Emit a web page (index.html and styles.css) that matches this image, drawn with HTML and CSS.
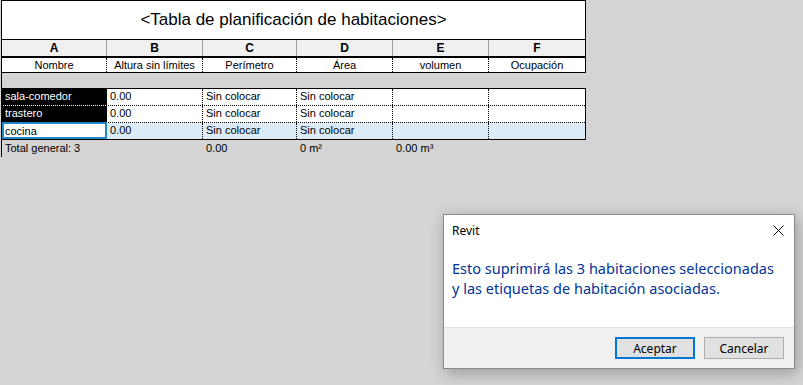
FILE: index.html
```html
<!DOCTYPE html>
<html lang="es">
<head>
    <meta charset="UTF-8">
    <meta name="viewport" content="width=device-width, initial-scale=1.0">
    <title>Tabla de planificación de habitaciones</title>
    <link rel="stylesheet" href="styles.css">
</head>
<body>
    <div class="sheet">
        <div class="sheet-title">&lt;Tabla de planificación de habitaciones&gt;</div>

        <div class="row letters">
            <div class="cell">A</div>
            <div class="cell">B</div>
            <div class="cell">C</div>
            <div class="cell">D</div>
            <div class="cell">E</div>
            <div class="cell">F</div>
        </div>

        <div class="row fields">
            <div class="cell">Nombre</div>
            <div class="cell">Altura sin límites</div>
            <div class="cell">Perímetro</div>
            <div class="cell">Área</div>
            <div class="cell">volumen</div>
            <div class="cell">Ocupación</div>
        </div>

        <div class="spacer"></div>

        <div class="body">
            <div class="row data">
                <div class="cell selected">sala-comedor</div>
                <div class="cell">0.00</div>
                <div class="cell">Sin colocar</div>
                <div class="cell">Sin colocar</div>
                <div class="cell"></div>
                <div class="cell"></div>
            </div>
            <div class="row data">
                <div class="cell selected">trastero</div>
                <div class="cell">0.00</div>
                <div class="cell">Sin colocar</div>
                <div class="cell">Sin colocar</div>
                <div class="cell"></div>
                <div class="cell"></div>
            </div>
            <div class="row data current">
                <div class="cell active">cocina</div>
                <div class="cell">0.00</div>
                <div class="cell">Sin colocar</div>
                <div class="cell">Sin colocar</div>
                <div class="cell"></div>
                <div class="cell"></div>
            </div>
        </div>

        <div class="row total">
            <div class="cell wide">Total general: 3</div>
            <div class="cell">0.00</div>
            <div class="cell">0 m²</div>
            <div class="cell">0.00 m³</div>
            <div class="cell"></div>
        </div>
    </div>

    <div class="dialog">
        <div class="dialog-head">
            <span>Revit</span>
            <svg class="close" width="11" height="11" viewBox="0 0 11 11">
                <path d="M0.5 0.5 L10.5 10.5 M10.5 0.5 L0.5 10.5" stroke="#000" stroke-width="1" fill="none"/>
            </svg>
        </div>
        <div class="dialog-body">
            <p>Esto suprimirá las 3 habitaciones seleccionadas<br>y las etiquetas de habitación asociadas.</p>
        </div>
        <div class="dialog-foot">
            <button class="btn default">Aceptar</button>
            <button class="btn">Cancelar</button>
        </div>
    </div>
</body>
</html>
```

FILE: styles.css
```css
body {
    margin: 0;
    padding: 0;
    background-color: #d4d4d4;
    font-family: 'Liberation Sans', Arial, sans-serif;
    font-size: 11px;
    color: #000;
}
.sheet {
    width: 584px;
    margin-left: 1px;
    border-left: 1px solid #000;
}
.sheet-title {
    height: 38px;
    border: 1px solid #000;
    border-left: none;
    background-color: #fff;
    display: flex;
    align-items: center;
    justify-content: center;
    font-size: 17px;
}
.row {
    display: grid;
    grid-template-columns: 105px 96px 94px 96px 96px 96px;
}
.cell {
    overflow: hidden;
    white-space: nowrap;
}
.letters {
    height: 16px;
    background-color: #f0f0f0;
    border-right: 1px solid #000;
    border-bottom: 2px solid #000;
}
.letters .cell {
    font-weight: bold;
    font-size: 12px;
    text-align: center;
    line-height: 16px;
    border-right: 1px solid #a0a0a0;
}
.letters .cell:last-child {
    border-right: none;
}
.fields {
    height: 14px;
    background-color: #fff;
    border-right: 1px solid #000;
    border-bottom: 1px solid #000;
}
.fields .cell {
    text-align: center;
    line-height: 14px;
    border-right: 1px dotted #000;
}
.fields .cell:last-child {
    border-right: none;
}
.spacer {
    height: 15px;
}
.body {
    border: 1px solid #000;
    border-left: none;
    background-color: #fff;
}
.data {
    height: 16px;
    border-bottom: 1px dotted #000;
}
.data:last-child {
    border-bottom: none;
}
.data .cell {
    line-height: 15px;
    padding-left: 3px;
    border-right: 1px dotted #000;
}
.data .cell:last-child {
    border-right: none;
}
.data .selected {
    background-color: #000;
    color: #fff;
    border-right: 1px solid #000;
}
.current {
    background-color: #dcebf8;
}
.data .active {
    background-color: #fff;
    border: 2px solid #1e88c8;
    margin-top: -1px;
    padding-left: 1px;
    line-height: 15px;
}
.total {
    height: 17px;
    grid-template-columns: 201px 94px 96px 96px 96px;
}
.total .cell {
    padding-left: 3px;
    line-height: 16px;
}
.dialog {
    position: absolute;
    left: 443px;
    top: 214px;
    width: 350px;
    height: 153px;
    border: 1px solid #8a8a8a;
    background-color: #fff;
    box-shadow: 2px 4px 14px rgba(0, 0, 0, 0.28);
    font-family: 'Noto Sans', 'Open Sans', sans-serif;
    display: flex;
    flex-direction: column;
}
.dialog-head {
    height: 30px;
    display: flex;
    align-items: center;
    justify-content: space-between;
    padding: 0 10px 0 8px;
    font-size: 12px;
}
.close {
    margin-top: 1px;
}
.dialog-body {
    flex: 1;
    padding: 0 8px;
}
.dialog-body p {
    margin: 13px 0 0;
    font-size: 14.5px;
    line-height: 20px;
    color: #003399;
}
.dialog-foot {
    height: 40px;
    background-color: #f0f0f0;
    border-top: 1px solid #dfdfdf;
    display: flex;
    align-items: center;
    justify-content: flex-end;
    gap: 9px;
    padding-right: 10px;
}
.btn {
    width: 80px;
    height: 22px;
    background-color: #e1e1e1;
    border: 1px solid #adadad;
    font-family: 'Noto Sans', 'Open Sans', sans-serif;
    font-size: 12px;
    padding: 0;
    color: #000;
}
.btn.default {
    border: 2px solid #0078d7;
}
```
